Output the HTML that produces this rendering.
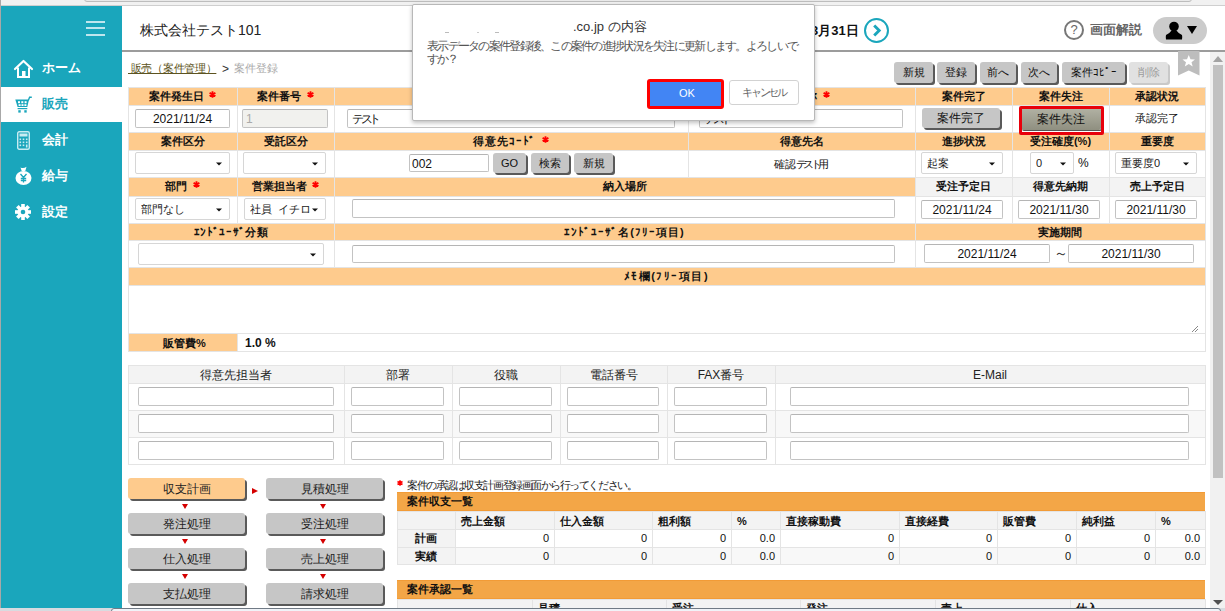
<!DOCTYPE html><html><head><meta charset="utf-8"><style>
html,body{margin:0;padding:0;}
body{width:1225px;height:611px;overflow:hidden;position:relative;background:#fff;font-family:"Liberation Sans",sans-serif;}
div{box-sizing:border-box;}
</style></head><body>
<div style="position:absolute;left:0px;top:0px;width:1225px;height:6px;background:#f1f1f1;border-bottom:1px solid #cfcfcf;"></div>
<div style="position:absolute;left:84px;top:-4px;width:1108px;height:6px;background:#e9e9e9;border:1px solid #bdbdbd;border-radius:3px;"></div>
<div style="position:absolute;left:0px;top:0px;width:1px;height:611px;background:#a8a8a8;"></div>
<div style="position:absolute;left:1px;top:6px;width:121px;height:602px;background:#1aa6bc;"></div>
<div style="position:absolute;left:86px;top:21px;width:19px;height:2px;background:#bfe6ee;"></div>
<div style="position:absolute;left:86px;top:27px;width:19px;height:2px;background:#bfe6ee;"></div>
<div style="position:absolute;left:86px;top:34px;width:19px;height:2px;background:#bfe6ee;"></div>
<div style="position:absolute;left:1px;top:87px;width:121px;height:35px;background:#fff;"></div>
<div style="position:absolute;left:42px;top:61px;font-size:13px;line-height:13px;color:#fff;font-weight:bold;white-space:nowrap;">ホーム</div>
<div style="position:absolute;left:42px;top:97px;font-size:13px;line-height:13px;color:#1aa6bc;font-weight:bold;white-space:nowrap;">販売</div>
<div style="position:absolute;left:42px;top:133px;font-size:13px;line-height:13px;color:#fff;font-weight:bold;white-space:nowrap;">会計</div>
<div style="position:absolute;left:42px;top:169px;font-size:13px;line-height:13px;color:#fff;font-weight:bold;white-space:nowrap;">給与</div>
<div style="position:absolute;left:42px;top:205px;font-size:13px;line-height:13px;color:#fff;font-weight:bold;white-space:nowrap;">設定</div>
<svg style="position:absolute;left:13px;top:59px" width="21" height="20" viewBox="0 0 21 20">
<path d="M2 10 L10.5 2 L19 10" fill="none" stroke="#fff" stroke-width="2.2" stroke-linecap="round" stroke-linejoin="round"/>
<path d="M5 8.5 V18 H16 V8.5" fill="none" stroke="#fff" stroke-width="2"/>
<rect x="9" y="12" width="3.5" height="6" fill="#fff"/>
</svg>
<svg style="position:absolute;left:15px;top:96px" width="17" height="17" viewBox="0 0 17 17">
<path d="M0.3 3.6 H14 L12.3 11 H2.6 Z" fill="#1aa6bc"/>
<g fill="#fff"><rect x="3" y="5.2" width="2" height="2"/><rect x="6.3" y="5.2" width="2" height="2"/><rect x="9.6" y="5.2" width="2" height="2"/>
<rect x="3.6" y="8.2" width="2" height="1.8"/><rect x="6.5" y="8.2" width="2" height="1.8"/><rect x="9.4" y="8.2" width="2" height="1.8"/></g>
<path d="M13.3 4.5 L14.6 1.2 H16.8" fill="none" stroke="#1aa6bc" stroke-width="1.4"/>
<path d="M2.6 12.6 H12.3" stroke="#1aa6bc" stroke-width="1.2"/>
<rect x="3.3" y="14.2" width="2.4" height="2.4" fill="#1aa6bc"/><rect x="9.3" y="14.2" width="2.4" height="2.4" fill="#1aa6bc"/>
</svg>
<svg style="position:absolute;left:17px;top:131px" width="13" height="19" viewBox="0 0 13 19">
<rect x="0.7" y="0.7" width="11.6" height="17.6" rx="1.5" fill="none" stroke="#c8ecf2" stroke-width="1.4"/>
<rect x="2.5" y="2.5" width="8" height="3" fill="#c8ecf2"/>
<g fill="#c8ecf2"><rect x="2.5" y="7.5" width="1.6" height="1.6"/><rect x="5.7" y="7.5" width="1.6" height="1.6"/><rect x="8.9" y="7.5" width="1.6" height="1.6"/>
<rect x="2.5" y="10.5" width="1.6" height="1.6"/><rect x="5.7" y="10.5" width="1.6" height="1.6"/><rect x="8.9" y="10.5" width="1.6" height="1.6"/>
<rect x="2.5" y="13.5" width="1.6" height="1.6"/><rect x="5.7" y="13.5" width="1.6" height="1.6"/><rect x="8.9" y="13.5" width="1.6" height="3"/></g>
</svg>
<svg style="position:absolute;left:15px;top:166px" width="17" height="19" viewBox="0 0 17 19">
<path d="M5.5 1.5 Q8.5 3 11.5 0.8 L10.3 5 H6.7 Z" fill="#fff"/>
<ellipse cx="8.5" cy="12" rx="8" ry="7" fill="#fff"/>
<path d="M5.5 8 L8.5 11.5 L11.5 8 M8.5 11.5 V16.5 M5.8 12.5 H11.2 M5.8 14.5 H11.2" fill="none" stroke="#1aa6bc" stroke-width="1.3"/>
</svg>
<svg style="position:absolute;left:15px;top:204px" width="16" height="16" viewBox="0 0 16 16">
<g fill="#fff" transform="translate(8 8)">
<rect x="-1.8" y="-8" width="3.6" height="16"/>
<rect x="-1.8" y="-8" width="3.6" height="16" transform="rotate(45)"/>
<rect x="-1.8" y="-8" width="3.6" height="16" transform="rotate(90)"/>
<rect x="-1.8" y="-8" width="3.6" height="16" transform="rotate(135)"/>
<circle r="5.5"/>
</g><circle cx="8" cy="8" r="2.3" fill="#1aa6bc"/>
</svg>
<div style="position:absolute;left:122px;top:6px;width:1103px;height:44px;background:#fff;"></div>
<div style="position:absolute;left:122px;top:50px;width:1103px;height:2px;background:#9c9c9c;"></div>
<div style="position:absolute;left:140px;top:23px;font-size:14px;line-height:14px;color:#222;font-weight:normal;white-space:nowrap;">株式会社テスト101</div>
<div style="position:absolute;left:811px;top:24px;font-size:13px;line-height:13px;color:#111;font-weight:bold;white-space:nowrap;">3月31日</div>
<div style="position:absolute;left:864px;top:18px;width:25px;height:25px;border:2.5px solid #1aa6bc;border-radius:50%;"></div>
<svg style="position:absolute;left:870px;top:24px" width="13" height="13" viewBox="0 0 13 13"><path d="M4.2 1.5 L9.2 6.5 L4.2 11.5" fill="none" stroke="#1aa6bc" stroke-width="2.9"/></svg>
<div style="position:absolute;left:1064px;top:20px;width:20px;height:20px;border:2px solid #777;border-radius:50%;color:#666;font-size:13px;line-height:16px;text-align:center;font-weight:normal;">?</div>
<div style="position:absolute;left:1090px;top:23px;font-size:13px;line-height:13px;color:#666;font-weight:bold;white-space:nowrap;">画面解説</div>
<div style="position:absolute;left:1153px;top:17px;width:54px;height:27px;background:#cbcbcb;border-radius:14px;"></div>
<svg style="position:absolute;left:1165px;top:21px" width="18" height="19" viewBox="0 0 18 19">
<circle cx="9" cy="5.5" r="4.8" fill="#000"/><path d="M6.5 9.5 Q5 12 1 14 Q0.5 16 1 18.5 H17 Q17.5 16 17 14 Q13 12 11.5 9.5 Z" fill="#000"/></svg>
<svg style="position:absolute;left:1187px;top:26px" width="10" height="8" viewBox="0 0 10 8"><path d="M0 0 H10 L5 8 Z" fill="#000"/></svg>
<div style="position:absolute;left:1210px;top:52px;width:15px;height:556px;background:#f1f1f1;"></div>
<svg style="position:absolute;left:1213px;top:56px" width="10" height="6" viewBox="0 0 10 6"><path d="M0 6 L5 0 L10 6 Z" fill="#a3a3a3"/></svg>
<div style="position:absolute;left:1213px;top:65px;width:10px;height:413px;background:#c1c1c1;"></div>
<svg style="position:absolute;left:1213px;top:600px" width="10" height="5" viewBox="0 0 10 5"><path d="M0 0 L5 5 L10 0 Z" fill="#505050"/></svg>
<div style="position:absolute;left:128px;top:63px;font-size:11px;line-height:11px;color:#5c5320;font-weight:normal;white-space:nowrap;text-decoration:underline;letter-spacing:-0.3px;">&nbsp;販売（案件管理）</div>
<div style="position:absolute;left:222px;top:63px;font-size:12px;line-height:12px;color:#333;font-weight:normal;white-space:nowrap;">&gt;</div>
<div style="position:absolute;left:234px;top:63px;font-size:11px;line-height:11px;color:#aaa;font-weight:normal;white-space:nowrap;">案件登録</div>
<svg style="position:absolute;left:1178px;top:51px" width="22" height="25" viewBox="0 0 22 25">
<path d="M0 0 H21.5 V24.5 L10.75 19.5 L0 24.5 Z" fill="#bdbdbd"/>
<path d="M10.75 4 L12.5 8.3 L17 8.5 L13.5 11.2 L14.7 15.5 L10.75 13 L6.8 15.5 L8 11.2 L4.5 8.5 L9 8.3 Z" fill="#fff"/></svg>
<div style="position:absolute;left:894px;top:62px;width:39px;height:21px;background:#c6c6c6;border-radius:3px;box-shadow:2px 2px 0 #5a5a5a;color:#111;font-size:11px;line-height:21px;text-align:center;white-space:nowrap;font-weight:normal">新規</div>
<div style="position:absolute;left:937px;top:62px;width:38px;height:21px;background:#c6c6c6;border-radius:3px;box-shadow:2px 2px 0 #5a5a5a;color:#111;font-size:11px;line-height:21px;text-align:center;white-space:nowrap;font-weight:normal">登録</div>
<div style="position:absolute;left:980px;top:62px;width:36px;height:21px;background:#c6c6c6;border-radius:3px;box-shadow:2px 2px 0 #5a5a5a;color:#111;font-size:11px;line-height:21px;text-align:center;white-space:nowrap;font-weight:normal">前へ</div>
<div style="position:absolute;left:1021px;top:62px;width:36px;height:21px;background:#c6c6c6;border-radius:3px;box-shadow:2px 2px 0 #5a5a5a;color:#111;font-size:11px;line-height:21px;text-align:center;white-space:nowrap;font-weight:normal">次へ</div>
<div style="position:absolute;left:1062px;top:62px;width:63px;height:21px;background:#c6c6c6;border-radius:3px;box-shadow:2px 2px 0 #5a5a5a;color:#111;font-size:11px;line-height:21px;text-align:center;white-space:nowrap;font-weight:normal">案件ｺﾋﾟｰ</div>
<div style="position:absolute;left:1129px;top:62px;width:39px;height:21px;background:#e1e1e1;border-radius:3px;box-shadow:2px 2px 0 #c9c9c9;color:#9a9a9a;font-size:11px;line-height:21px;text-align:center;white-space:nowrap;font-weight:normal">削除</div>
<div style="position:absolute;left:128px;top:87px;width:110px;height:19px;background:#fecb8d;border:1px solid #e4e4e4;"></div>
<div style="position:absolute;left:128px;top:105px;width:110px;height:28px;background:#fff;border:1px solid #e4e4e4;"></div>
<div style="position:absolute;left:237px;top:87px;width:98px;height:19px;background:#fecb8d;border:1px solid #e4e4e4;"></div>
<div style="position:absolute;left:237px;top:105px;width:98px;height:28px;background:#fff;border:1px solid #e4e4e4;"></div>
<div style="position:absolute;left:334px;top:87px;width:355px;height:19px;background:#fecb8d;border:1px solid #e4e4e4;"></div>
<div style="position:absolute;left:334px;top:105px;width:355px;height:28px;background:#fff;border:1px solid #e4e4e4;"></div>
<div style="position:absolute;left:688px;top:87px;width:228px;height:19px;background:#fecb8d;border:1px solid #e4e4e4;"></div>
<div style="position:absolute;left:688px;top:105px;width:228px;height:28px;background:#fff;border:1px solid #e4e4e4;"></div>
<div style="position:absolute;left:915px;top:87px;width:98px;height:19px;background:#fecb8d;border:1px solid #e4e4e4;"></div>
<div style="position:absolute;left:915px;top:105px;width:98px;height:28px;background:#fff;border:1px solid #e4e4e4;"></div>
<div style="position:absolute;left:1012px;top:87px;width:98px;height:19px;background:#fecb8d;border:1px solid #e4e4e4;"></div>
<div style="position:absolute;left:1012px;top:105px;width:98px;height:28px;background:#fff;border:1px solid #e4e4e4;"></div>
<div style="position:absolute;left:1109px;top:87px;width:97px;height:19px;background:#fecb8d;border:1px solid #e4e4e4;"></div>
<div style="position:absolute;left:1109px;top:105px;width:97px;height:28px;background:#fff;border:1px solid #e4e4e4;"></div>
<div style="position:absolute;left:128px;top:132px;width:110px;height:19px;background:#fecb8d;border:1px solid #e4e4e4;"></div>
<div style="position:absolute;left:128px;top:150px;width:110px;height:28px;background:#fff;border:1px solid #e4e4e4;"></div>
<div style="position:absolute;left:237px;top:132px;width:98px;height:19px;background:#fecb8d;border:1px solid #e4e4e4;"></div>
<div style="position:absolute;left:237px;top:150px;width:98px;height:28px;background:#fff;border:1px solid #e4e4e4;"></div>
<div style="position:absolute;left:334px;top:132px;width:355px;height:19px;background:#fecb8d;border:1px solid #e4e4e4;"></div>
<div style="position:absolute;left:334px;top:150px;width:355px;height:28px;background:#fff;border:1px solid #e4e4e4;"></div>
<div style="position:absolute;left:688px;top:132px;width:228px;height:19px;background:#fecb8d;border:1px solid #e4e4e4;"></div>
<div style="position:absolute;left:688px;top:150px;width:228px;height:28px;background:#fff;border:1px solid #e4e4e4;"></div>
<div style="position:absolute;left:915px;top:132px;width:98px;height:19px;background:#fecb8d;border:1px solid #e4e4e4;"></div>
<div style="position:absolute;left:915px;top:150px;width:98px;height:28px;background:#fff;border:1px solid #e4e4e4;"></div>
<div style="position:absolute;left:1012px;top:132px;width:98px;height:19px;background:#fecb8d;border:1px solid #e4e4e4;"></div>
<div style="position:absolute;left:1012px;top:150px;width:98px;height:28px;background:#fff;border:1px solid #e4e4e4;"></div>
<div style="position:absolute;left:1109px;top:132px;width:97px;height:19px;background:#fecb8d;border:1px solid #e4e4e4;"></div>
<div style="position:absolute;left:1109px;top:150px;width:97px;height:28px;background:#fff;border:1px solid #e4e4e4;"></div>
<div style="position:absolute;left:128px;top:177px;width:110px;height:20px;background:#fecb8d;border:1px solid #e4e4e4;"></div>
<div style="position:absolute;left:128px;top:196px;width:110px;height:28px;background:#fff;border:1px solid #e4e4e4;"></div>
<div style="position:absolute;left:237px;top:177px;width:98px;height:20px;background:#fecb8d;border:1px solid #e4e4e4;"></div>
<div style="position:absolute;left:237px;top:196px;width:98px;height:28px;background:#fff;border:1px solid #e4e4e4;"></div>
<div style="position:absolute;left:334px;top:177px;width:582px;height:20px;background:#fecb8d;border:1px solid #e4e4e4;"></div>
<div style="position:absolute;left:334px;top:196px;width:582px;height:28px;background:#fff;border:1px solid #e4e4e4;"></div>
<div style="position:absolute;left:915px;top:177px;width:98px;height:20px;background:#f3f3f3;border:1px solid #e4e4e4;"></div>
<div style="position:absolute;left:915px;top:196px;width:98px;height:28px;background:#fff;border:1px solid #e4e4e4;"></div>
<div style="position:absolute;left:1012px;top:177px;width:98px;height:20px;background:#f3f3f3;border:1px solid #e4e4e4;"></div>
<div style="position:absolute;left:1012px;top:196px;width:98px;height:28px;background:#fff;border:1px solid #e4e4e4;"></div>
<div style="position:absolute;left:1109px;top:177px;width:97px;height:20px;background:#f3f3f3;border:1px solid #e4e4e4;"></div>
<div style="position:absolute;left:1109px;top:196px;width:97px;height:28px;background:#fff;border:1px solid #e4e4e4;"></div>
<div style="position:absolute;left:128px;top:223px;width:207px;height:18px;background:#fecb8d;border:1px solid #e4e4e4;"></div>
<div style="position:absolute;left:128px;top:240px;width:207px;height:28px;background:#fff;border:1px solid #e4e4e4;"></div>
<div style="position:absolute;left:334px;top:223px;width:582px;height:18px;background:#fecb8d;border:1px solid #e4e4e4;"></div>
<div style="position:absolute;left:334px;top:240px;width:582px;height:28px;background:#fff;border:1px solid #e4e4e4;"></div>
<div style="position:absolute;left:915px;top:223px;width:291px;height:18px;background:#fecb8d;border:1px solid #e4e4e4;"></div>
<div style="position:absolute;left:915px;top:240px;width:291px;height:28px;background:#fff;border:1px solid #e4e4e4;"></div>
<div style="position:absolute;left:128px;top:267px;width:1078px;height:19px;background:#fecb8d;border:1px solid #e4e4e4;"></div>
<div style="position:absolute;left:128px;top:285px;width:1078px;height:49px;background:#fff;border:1px solid #e4e4e4;"></div>
<div style="position:absolute;left:128px;top:333px;width:110px;height:19px;background:#fecb8d;border:1px solid #e4e4e4;"></div>
<div style="position:absolute;left:237px;top:333px;width:969px;height:19px;background:#fff;border:1px solid #e4e4e4;"></div>
<div style="position:absolute;left:128px;top:91px;width:109px;text-align:center;font-size:11px;line-height:11px;color:#111;font-weight:bold;white-space:nowrap;">案件発生日 <svg style="display:inline-block;vertical-align:top;margin-top:0px;margin-left:2px" width="7" height="7" viewBox="0 0 7 7"><path d="M3.5 0.3 V6.7 M0.6 1.9 L6.4 5.1 M0.6 5.1 L6.4 1.9" stroke="#f00" stroke-width="1.8"/></svg></div>
<div style="position:absolute;left:237px;top:91px;width:97px;text-align:center;font-size:11px;line-height:11px;color:#111;font-weight:bold;white-space:nowrap;">案件番号 <svg style="display:inline-block;vertical-align:top;margin-top:0px;margin-left:2px" width="7" height="7" viewBox="0 0 7 7"><path d="M3.5 0.3 V6.7 M0.6 1.9 L6.4 5.1 M0.6 5.1 L6.4 1.9" stroke="#f00" stroke-width="1.8"/></svg></div>
<div style="position:absolute;left:688px;top:91px;width:227px;text-align:center;font-size:11px;line-height:11px;color:#111;font-weight:bold;white-space:nowrap;">案件名称 <svg style="display:inline-block;vertical-align:top;margin-top:0px;margin-left:2px" width="7" height="7" viewBox="0 0 7 7"><path d="M3.5 0.3 V6.7 M0.6 1.9 L6.4 5.1 M0.6 5.1 L6.4 1.9" stroke="#f00" stroke-width="1.8"/></svg></div>
<div style="position:absolute;left:915px;top:91px;width:97px;text-align:center;font-size:11px;line-height:11px;color:#111;font-weight:bold;white-space:nowrap;">案件完了</div>
<div style="position:absolute;left:1012px;top:91px;width:97px;text-align:center;font-size:11px;line-height:11px;color:#111;font-weight:bold;white-space:nowrap;">案件失注</div>
<div style="position:absolute;left:1109px;top:91px;width:96px;text-align:center;font-size:11px;line-height:11px;color:#111;font-weight:bold;white-space:nowrap;">承認状況</div>
<div style="position:absolute;left:128px;top:136px;width:109px;text-align:center;font-size:11px;line-height:11px;color:#111;font-weight:bold;white-space:nowrap;">案件区分</div>
<div style="position:absolute;left:237px;top:136px;width:97px;text-align:center;font-size:11px;line-height:11px;color:#111;font-weight:bold;white-space:nowrap;">受託区分</div>
<div style="position:absolute;left:334px;top:136px;width:354px;text-align:center;font-size:11px;line-height:11px;color:#111;font-weight:bold;white-space:nowrap;letter-spacing:0.85px;">得意先ｺｰﾄﾞ <svg style="display:inline-block;vertical-align:top;margin-top:0px;margin-left:2px" width="7" height="7" viewBox="0 0 7 7"><path d="M3.5 0.3 V6.7 M0.6 1.9 L6.4 5.1 M0.6 5.1 L6.4 1.9" stroke="#f00" stroke-width="1.8"/></svg></div>
<div style="position:absolute;left:688px;top:136px;width:227px;text-align:center;font-size:11px;line-height:11px;color:#111;font-weight:bold;white-space:nowrap;">得意先名</div>
<div style="position:absolute;left:915px;top:136px;width:97px;text-align:center;font-size:11px;line-height:11px;color:#111;font-weight:bold;white-space:nowrap;">進捗状況</div>
<div style="position:absolute;left:1012px;top:136px;width:97px;text-align:center;font-size:11px;line-height:11px;color:#111;font-weight:bold;white-space:nowrap;">受注確度(%)</div>
<div style="position:absolute;left:1109px;top:136px;width:96px;text-align:center;font-size:11px;line-height:11px;color:#111;font-weight:bold;white-space:nowrap;">重要度</div>
<div style="position:absolute;left:128px;top:181px;width:109px;text-align:center;font-size:11px;line-height:11px;color:#111;font-weight:bold;white-space:nowrap;">部門 <svg style="display:inline-block;vertical-align:top;margin-top:0px;margin-left:2px" width="7" height="7" viewBox="0 0 7 7"><path d="M3.5 0.3 V6.7 M0.6 1.9 L6.4 5.1 M0.6 5.1 L6.4 1.9" stroke="#f00" stroke-width="1.8"/></svg></div>
<div style="position:absolute;left:237px;top:181px;width:97px;text-align:center;font-size:11px;line-height:11px;color:#111;font-weight:bold;white-space:nowrap;">営業担当者 <svg style="display:inline-block;vertical-align:top;margin-top:0px;margin-left:2px" width="7" height="7" viewBox="0 0 7 7"><path d="M3.5 0.3 V6.7 M0.6 1.9 L6.4 5.1 M0.6 5.1 L6.4 1.9" stroke="#f00" stroke-width="1.8"/></svg></div>
<div style="position:absolute;left:334px;top:181px;width:581px;text-align:center;font-size:11px;line-height:11px;color:#111;font-weight:bold;white-space:nowrap;">納入場所</div>
<div style="position:absolute;left:915px;top:181px;width:97px;text-align:center;font-size:11px;line-height:11px;color:#111;font-weight:bold;white-space:nowrap;">受注予定日</div>
<div style="position:absolute;left:1012px;top:181px;width:97px;text-align:center;font-size:11px;line-height:11px;color:#111;font-weight:bold;white-space:nowrap;">得意先納期</div>
<div style="position:absolute;left:1109px;top:181px;width:96px;text-align:center;font-size:11px;line-height:11px;color:#111;font-weight:bold;white-space:nowrap;">売上予定日</div>
<div style="position:absolute;left:128px;top:227px;width:206px;text-align:center;font-size:11px;line-height:11px;color:#111;font-weight:bold;white-space:nowrap;letter-spacing:0.6px;">ｴﾝﾄﾞﾕｰｻﾞ分類</div>
<div style="position:absolute;left:334px;top:227px;width:581px;text-align:center;font-size:11px;line-height:11px;color:#111;font-weight:bold;white-space:nowrap;letter-spacing:1px;">ｴﾝﾄﾞﾕｰｻﾞ名(ﾌﾘｰ項目)</div>
<div style="position:absolute;left:915px;top:227px;width:290px;text-align:center;font-size:11px;line-height:11px;color:#111;font-weight:bold;white-space:nowrap;">実施期間</div>
<div style="position:absolute;left:128px;top:271px;width:1077px;text-align:center;font-size:11px;line-height:11px;color:#111;font-weight:bold;white-space:nowrap;letter-spacing:1.5px;">ﾒﾓ欄(ﾌﾘｰ項目)</div>
<div style="position:absolute;left:130px;top:338px;width:109px;text-align:center;font-size:11px;line-height:11px;color:#111;font-weight:bold;white-space:nowrap;">販管費%</div>
<div style="position:absolute;left:245px;top:337px;font-size:12px;line-height:12px;color:#111;font-weight:bold;white-space:nowrap;">1.0 %</div>
<div style="position:absolute;left:135px;top:109px;width:95px;height:19px;background:#fff;border:1px solid #c3c3c3;border-top-color:#b5b5b5;border-radius:2px;font-size:12px;line-height:17px;color:#111;text-align:center;padding:1px 4px 0 4px;white-space:nowrap;overflow:hidden;">2021/11/24</div>
<div style="position:absolute;left:242px;top:109px;width:86px;height:19px;background:#f1f1ee;border:1px solid #c3c3c3;border-top-color:#b5b5b5;border-radius:2px;font-size:12px;line-height:17px;color:#aaa;text-align:left;padding:1px 3px 0 3px;white-space:nowrap;overflow:hidden;">1</div>
<div style="position:absolute;left:347px;top:109px;width:328px;height:19px;background:#fff;border:1px solid #c3c3c3;border-top-color:#b5b5b5;border-radius:2px;font-size:12px;line-height:17px;color:#111;text-align:left;padding:1px 4px 0 4px;white-space:nowrap;overflow:hidden;"><span style="letter-spacing:-3.5px">テスト</span></div>
<div style="position:absolute;left:699px;top:109px;width:204px;height:19px;background:#fff;border:1px solid #c3c3c3;border-top-color:#b5b5b5;border-radius:2px;font-size:12px;line-height:17px;color:#111;text-align:left;padding:1px 4px 0 4px;white-space:nowrap;overflow:hidden;"><span style="letter-spacing:-3.5px">テスト</span></div>
<div style="position:absolute;left:922px;top:108px;width:78px;height:20px;background:#c6c6c6;border-radius:3px;box-shadow:2px 2px 0 #5a5a5a;color:#111;font-size:12px;line-height:20px;text-align:center;white-space:nowrap;font-weight:normal">案件完了</div>
<div style="position:absolute;left:1021px;top:108px;width:80px;height:22px;background:linear-gradient(#b2b2a4,#8f8f80);border-radius:2px;box-shadow:1px 1px 0 #555;font-size:12px;line-height:22px;text-align:center;color:#111;">案件失注</div>
<div style="position:absolute;left:1019px;top:106px;width:85px;height:29px;border:3px solid #e8000b;border-radius:2px;"></div>
<div style="position:absolute;left:1109px;top:113px;width:96px;text-align:center;font-size:11px;line-height:11px;color:#111;font-weight:normal;white-space:nowrap;">承認完了</div>
<div style="position:absolute;left:135px;top:152px;width:95px;height:22px;background:#fff;border:1px solid #d6d6d6;border-radius:2px;font-size:11px;line-height:20px;color:#222;padding:0 0 0 5px;white-space:nowrap;overflow:hidden;"><div style="width:73px;overflow:hidden;"></div></div>
<svg style="position:absolute;left:216px;top:162px" width="6" height="4" viewBox="0 0 6 4"><path d="M0 0.5 H6 L3 3.5 Z" fill="#111"/></svg>
<div style="position:absolute;left:243px;top:152px;width:83px;height:22px;background:#fff;border:1px solid #d6d6d6;border-radius:2px;font-size:11px;line-height:20px;color:#222;padding:0 0 0 5px;white-space:nowrap;overflow:hidden;"><div style="width:61px;overflow:hidden;"></div></div>
<svg style="position:absolute;left:312px;top:162px" width="6" height="4" viewBox="0 0 6 4"><path d="M0 0.5 H6 L3 3.5 Z" fill="#111"/></svg>
<div style="position:absolute;left:409px;top:154px;width:80px;height:18px;background:#fff;border:1px solid #c3c3c3;border-top-color:#b5b5b5;border-radius:2px;font-size:12px;line-height:16px;color:#111;text-align:left;padding:1px 2px 0 2px;white-space:nowrap;overflow:hidden;">002</div>
<div style="position:absolute;left:493px;top:153px;width:33px;height:20px;background:#c6c6c6;border-radius:3px;box-shadow:2px 2px 0 #5a5a5a;color:#111;font-size:11px;line-height:20px;text-align:center;white-space:nowrap;font-weight:normal">GO</div>
<div style="position:absolute;left:531px;top:153px;width:38px;height:20px;background:#c6c6c6;border-radius:3px;box-shadow:2px 2px 0 #5a5a5a;color:#111;font-size:11px;line-height:20px;text-align:center;white-space:nowrap;font-weight:normal">検索</div>
<div style="position:absolute;left:574px;top:153px;width:39px;height:20px;background:#c6c6c6;border-radius:3px;box-shadow:2px 2px 0 #5a5a5a;color:#111;font-size:11px;line-height:20px;text-align:center;white-space:nowrap;font-weight:normal">新規</div>
<div style="position:absolute;left:688px;top:159px;width:227px;text-align:center;font-size:11px;line-height:11px;color:#111;font-weight:normal;white-space:nowrap;">確認<span style="letter-spacing:-3.5px">テスト</span>用</div>
<div style="position:absolute;left:921px;top:152px;width:82px;height:22px;background:#fff;border:1px solid #d6d6d6;border-radius:2px;font-size:11px;line-height:20px;color:#222;padding:0 0 0 5px;white-space:nowrap;overflow:hidden;"><div style="width:60px;overflow:hidden;">起案</div></div>
<svg style="position:absolute;left:989px;top:162px" width="6" height="4" viewBox="0 0 6 4"><path d="M0 0.5 H6 L3 3.5 Z" fill="#111"/></svg>
<div style="position:absolute;left:1030px;top:152px;width:44px;height:22px;background:#fff;border:1px solid #d6d6d6;border-radius:2px;font-size:11px;line-height:20px;color:#222;padding:0 0 0 5px;white-space:nowrap;overflow:hidden;"><div style="width:22px;overflow:hidden;">0</div></div>
<svg style="position:absolute;left:1060px;top:162px" width="6" height="4" viewBox="0 0 6 4"><path d="M0 0.5 H6 L3 3.5 Z" fill="#111"/></svg>
<div style="position:absolute;left:1078px;top:157px;font-size:12px;line-height:12px;color:#111;font-weight:normal;white-space:nowrap;">%</div>
<div style="position:absolute;left:1115px;top:152px;width:82px;height:22px;background:#fff;border:1px solid #d6d6d6;border-radius:2px;font-size:11px;line-height:20px;color:#222;padding:0 0 0 5px;white-space:nowrap;overflow:hidden;"><div style="width:60px;overflow:hidden;">重要度0</div></div>
<svg style="position:absolute;left:1183px;top:162px" width="6" height="4" viewBox="0 0 6 4"><path d="M0 0.5 H6 L3 3.5 Z" fill="#111"/></svg>
<div style="position:absolute;left:135px;top:198px;width:95px;height:22px;background:#fff;border:1px solid #d6d6d6;border-radius:2px;font-size:11px;line-height:20px;color:#222;padding:0 0 0 5px;white-space:nowrap;overflow:hidden;"><div style="width:73px;overflow:hidden;">部門なし</div></div>
<svg style="position:absolute;left:216px;top:208px" width="6" height="4" viewBox="0 0 6 4"><path d="M0 0.5 H6 L3 3.5 Z" fill="#111"/></svg>
<div style="position:absolute;left:244px;top:198px;width:82px;height:22px;background:#fff;border:1px solid #d6d6d6;border-radius:2px;font-size:11px;line-height:20px;color:#222;padding:0 0 0 5px;white-space:nowrap;overflow:hidden;"><div style="width:60px;overflow:hidden;">社員&nbsp;&nbsp;イチロウ</div></div>
<svg style="position:absolute;left:312px;top:208px" width="6" height="4" viewBox="0 0 6 4"><path d="M0 0.5 H6 L3 3.5 Z" fill="#111"/></svg>
<div style="position:absolute;left:352px;top:199px;width:543px;height:19px;background:#fff;border:1px solid #c3c3c3;border-top-color:#b5b5b5;border-radius:2px;font-size:12px;line-height:17px;color:#111;text-align:left;padding:1px 4px 0 4px;white-space:nowrap;overflow:hidden;"></div>
<div style="position:absolute;left:921px;top:200px;width:82px;height:19px;background:#fff;border:1px solid #c3c3c3;border-top-color:#b5b5b5;border-radius:2px;font-size:12px;line-height:17px;color:#111;text-align:center;padding:1px 4px 0 4px;white-space:nowrap;overflow:hidden;">2021/11/24</div>
<div style="position:absolute;left:1018px;top:200px;width:82px;height:19px;background:#fff;border:1px solid #c3c3c3;border-top-color:#b5b5b5;border-radius:2px;font-size:12px;line-height:17px;color:#111;text-align:center;padding:1px 4px 0 4px;white-space:nowrap;overflow:hidden;">2021/11/30</div>
<div style="position:absolute;left:1115px;top:200px;width:82px;height:19px;background:#fff;border:1px solid #c3c3c3;border-top-color:#b5b5b5;border-radius:2px;font-size:12px;line-height:17px;color:#111;text-align:center;padding:1px 4px 0 4px;white-space:nowrap;overflow:hidden;">2021/11/30</div>
<div style="position:absolute;left:138px;top:243px;width:186px;height:22px;background:#fff;border:1px solid #d6d6d6;border-radius:2px;font-size:11px;line-height:20px;color:#222;padding:0 0 0 5px;white-space:nowrap;overflow:hidden;"><div style="width:164px;overflow:hidden;"></div></div>
<svg style="position:absolute;left:310px;top:253px" width="6" height="4" viewBox="0 0 6 4"><path d="M0 0.5 H6 L3 3.5 Z" fill="#111"/></svg>
<div style="position:absolute;left:352px;top:245px;width:543px;height:18px;background:#fff;border:1px solid #c3c3c3;border-top-color:#b5b5b5;border-radius:2px;font-size:12px;line-height:16px;color:#111;text-align:left;padding:1px 4px 0 4px;white-space:nowrap;overflow:hidden;"></div>
<div style="position:absolute;left:924px;top:244px;width:126px;height:19px;background:#fff;border:1px solid #c3c3c3;border-top-color:#b5b5b5;border-radius:2px;font-size:12px;line-height:17px;color:#111;text-align:center;padding:1px 4px 0 4px;white-space:nowrap;overflow:hidden;">2021/11/24</div>
<div style="position:absolute;left:1054px;top:246px;font-size:14px;line-height:14px;color:#333;font-weight:normal;white-space:nowrap;">～</div>
<div style="position:absolute;left:1068px;top:244px;width:126px;height:19px;background:#fff;border:1px solid #c3c3c3;border-top-color:#b5b5b5;border-radius:2px;font-size:12px;line-height:17px;color:#111;text-align:center;padding:1px 4px 0 4px;white-space:nowrap;overflow:hidden;">2021/11/30</div>
<svg style="position:absolute;left:1191px;top:325px" width="8" height="8" viewBox="0 0 8 8"><path d="M1 7 L7 1 M4 7 L7 4" stroke="#888" stroke-width="1"/></svg>
<div style="position:absolute;left:128px;top:365px;width:217px;height:19px;background:#f3f3f3;border:1px solid #e4e4e4;"></div>
<div style="position:absolute;left:128px;top:383px;width:217px;height:28px;background:#fff;border:1px solid #e4e4e4;"></div>
<div style="position:absolute;left:128px;top:410px;width:217px;height:28px;background:#f8f8f8;border:1px solid #e4e4e4;"></div>
<div style="position:absolute;left:128px;top:437px;width:217px;height:28px;background:#fff;border:1px solid #e4e4e4;"></div>
<div style="position:absolute;left:344px;top:365px;width:109px;height:19px;background:#f3f3f3;border:1px solid #e4e4e4;"></div>
<div style="position:absolute;left:344px;top:383px;width:109px;height:28px;background:#fff;border:1px solid #e4e4e4;"></div>
<div style="position:absolute;left:344px;top:410px;width:109px;height:28px;background:#f8f8f8;border:1px solid #e4e4e4;"></div>
<div style="position:absolute;left:344px;top:437px;width:109px;height:28px;background:#fff;border:1px solid #e4e4e4;"></div>
<div style="position:absolute;left:452px;top:365px;width:109px;height:19px;background:#f3f3f3;border:1px solid #e4e4e4;"></div>
<div style="position:absolute;left:452px;top:383px;width:109px;height:28px;background:#fff;border:1px solid #e4e4e4;"></div>
<div style="position:absolute;left:452px;top:410px;width:109px;height:28px;background:#f8f8f8;border:1px solid #e4e4e4;"></div>
<div style="position:absolute;left:452px;top:437px;width:109px;height:28px;background:#fff;border:1px solid #e4e4e4;"></div>
<div style="position:absolute;left:560px;top:365px;width:108px;height:19px;background:#f3f3f3;border:1px solid #e4e4e4;"></div>
<div style="position:absolute;left:560px;top:383px;width:108px;height:28px;background:#fff;border:1px solid #e4e4e4;"></div>
<div style="position:absolute;left:560px;top:410px;width:108px;height:28px;background:#f8f8f8;border:1px solid #e4e4e4;"></div>
<div style="position:absolute;left:560px;top:437px;width:108px;height:28px;background:#fff;border:1px solid #e4e4e4;"></div>
<div style="position:absolute;left:667px;top:365px;width:109px;height:19px;background:#f3f3f3;border:1px solid #e4e4e4;"></div>
<div style="position:absolute;left:667px;top:383px;width:109px;height:28px;background:#fff;border:1px solid #e4e4e4;"></div>
<div style="position:absolute;left:667px;top:410px;width:109px;height:28px;background:#f8f8f8;border:1px solid #e4e4e4;"></div>
<div style="position:absolute;left:667px;top:437px;width:109px;height:28px;background:#fff;border:1px solid #e4e4e4;"></div>
<div style="position:absolute;left:775px;top:365px;width:431px;height:19px;background:#f3f3f3;border:1px solid #e4e4e4;"></div>
<div style="position:absolute;left:775px;top:383px;width:431px;height:28px;background:#fff;border:1px solid #e4e4e4;"></div>
<div style="position:absolute;left:775px;top:410px;width:431px;height:28px;background:#f8f8f8;border:1px solid #e4e4e4;"></div>
<div style="position:absolute;left:775px;top:437px;width:431px;height:28px;background:#fff;border:1px solid #e4e4e4;"></div>
<div style="position:absolute;left:128px;top:369px;width:216px;text-align:center;font-size:12px;line-height:12px;color:#222;font-weight:normal;white-space:nowrap;">得意先担当者</div>
<div style="position:absolute;left:344px;top:369px;width:108px;text-align:center;font-size:12px;line-height:12px;color:#222;font-weight:normal;white-space:nowrap;">部署</div>
<div style="position:absolute;left:452px;top:369px;width:108px;text-align:center;font-size:12px;line-height:12px;color:#222;font-weight:normal;white-space:nowrap;">役職</div>
<div style="position:absolute;left:560px;top:369px;width:107px;text-align:center;font-size:12px;line-height:12px;color:#222;font-weight:normal;white-space:nowrap;">電話番号</div>
<div style="position:absolute;left:667px;top:369px;width:108px;text-align:center;font-size:12px;line-height:12px;color:#222;font-weight:normal;white-space:nowrap;">FAX番号</div>
<div style="position:absolute;left:775px;top:369px;width:430px;text-align:center;font-size:12px;line-height:12px;color:#222;font-weight:normal;white-space:nowrap;">E-Mail</div>
<div style="position:absolute;left:138px;top:387px;width:196px;height:19px;background:#fff;border:1px solid #c3c3c3;border-top-color:#b5b5b5;border-radius:2px;font-size:12px;line-height:17px;color:#111;text-align:left;padding:1px 4px 0 4px;white-space:nowrap;overflow:hidden;"></div>
<div style="position:absolute;left:351px;top:387px;width:93px;height:19px;background:#fff;border:1px solid #c3c3c3;border-top-color:#b5b5b5;border-radius:2px;font-size:12px;line-height:17px;color:#111;text-align:left;padding:1px 4px 0 4px;white-space:nowrap;overflow:hidden;"></div>
<div style="position:absolute;left:459px;top:387px;width:93px;height:19px;background:#fff;border:1px solid #c3c3c3;border-top-color:#b5b5b5;border-radius:2px;font-size:12px;line-height:17px;color:#111;text-align:left;padding:1px 4px 0 4px;white-space:nowrap;overflow:hidden;"></div>
<div style="position:absolute;left:567px;top:387px;width:92px;height:19px;background:#fff;border:1px solid #c3c3c3;border-top-color:#b5b5b5;border-radius:2px;font-size:12px;line-height:17px;color:#111;text-align:left;padding:1px 4px 0 4px;white-space:nowrap;overflow:hidden;"></div>
<div style="position:absolute;left:674px;top:387px;width:93px;height:19px;background:#fff;border:1px solid #c3c3c3;border-top-color:#b5b5b5;border-radius:2px;font-size:12px;line-height:17px;color:#111;text-align:left;padding:1px 4px 0 4px;white-space:nowrap;overflow:hidden;"></div>
<div style="position:absolute;left:790px;top:387px;width:399px;height:19px;background:#fff;border:1px solid #c3c3c3;border-top-color:#b5b5b5;border-radius:2px;font-size:12px;line-height:17px;color:#111;text-align:left;padding:1px 4px 0 4px;white-space:nowrap;overflow:hidden;"></div>
<div style="position:absolute;left:138px;top:414px;width:196px;height:19px;background:#fff;border:1px solid #c3c3c3;border-top-color:#b5b5b5;border-radius:2px;font-size:12px;line-height:17px;color:#111;text-align:left;padding:1px 4px 0 4px;white-space:nowrap;overflow:hidden;"></div>
<div style="position:absolute;left:351px;top:414px;width:93px;height:19px;background:#fff;border:1px solid #c3c3c3;border-top-color:#b5b5b5;border-radius:2px;font-size:12px;line-height:17px;color:#111;text-align:left;padding:1px 4px 0 4px;white-space:nowrap;overflow:hidden;"></div>
<div style="position:absolute;left:459px;top:414px;width:93px;height:19px;background:#fff;border:1px solid #c3c3c3;border-top-color:#b5b5b5;border-radius:2px;font-size:12px;line-height:17px;color:#111;text-align:left;padding:1px 4px 0 4px;white-space:nowrap;overflow:hidden;"></div>
<div style="position:absolute;left:567px;top:414px;width:92px;height:19px;background:#fff;border:1px solid #c3c3c3;border-top-color:#b5b5b5;border-radius:2px;font-size:12px;line-height:17px;color:#111;text-align:left;padding:1px 4px 0 4px;white-space:nowrap;overflow:hidden;"></div>
<div style="position:absolute;left:674px;top:414px;width:93px;height:19px;background:#fff;border:1px solid #c3c3c3;border-top-color:#b5b5b5;border-radius:2px;font-size:12px;line-height:17px;color:#111;text-align:left;padding:1px 4px 0 4px;white-space:nowrap;overflow:hidden;"></div>
<div style="position:absolute;left:790px;top:414px;width:399px;height:19px;background:#fff;border:1px solid #c3c3c3;border-top-color:#b5b5b5;border-radius:2px;font-size:12px;line-height:17px;color:#111;text-align:left;padding:1px 4px 0 4px;white-space:nowrap;overflow:hidden;"></div>
<div style="position:absolute;left:138px;top:441px;width:196px;height:19px;background:#fff;border:1px solid #c3c3c3;border-top-color:#b5b5b5;border-radius:2px;font-size:12px;line-height:17px;color:#111;text-align:left;padding:1px 4px 0 4px;white-space:nowrap;overflow:hidden;"></div>
<div style="position:absolute;left:351px;top:441px;width:93px;height:19px;background:#fff;border:1px solid #c3c3c3;border-top-color:#b5b5b5;border-radius:2px;font-size:12px;line-height:17px;color:#111;text-align:left;padding:1px 4px 0 4px;white-space:nowrap;overflow:hidden;"></div>
<div style="position:absolute;left:459px;top:441px;width:93px;height:19px;background:#fff;border:1px solid #c3c3c3;border-top-color:#b5b5b5;border-radius:2px;font-size:12px;line-height:17px;color:#111;text-align:left;padding:1px 4px 0 4px;white-space:nowrap;overflow:hidden;"></div>
<div style="position:absolute;left:567px;top:441px;width:92px;height:19px;background:#fff;border:1px solid #c3c3c3;border-top-color:#b5b5b5;border-radius:2px;font-size:12px;line-height:17px;color:#111;text-align:left;padding:1px 4px 0 4px;white-space:nowrap;overflow:hidden;"></div>
<div style="position:absolute;left:674px;top:441px;width:93px;height:19px;background:#fff;border:1px solid #c3c3c3;border-top-color:#b5b5b5;border-radius:2px;font-size:12px;line-height:17px;color:#111;text-align:left;padding:1px 4px 0 4px;white-space:nowrap;overflow:hidden;"></div>
<div style="position:absolute;left:790px;top:441px;width:399px;height:19px;background:#fff;border:1px solid #c3c3c3;border-top-color:#b5b5b5;border-radius:2px;font-size:12px;line-height:17px;color:#111;text-align:left;padding:1px 4px 0 4px;white-space:nowrap;overflow:hidden;"></div>
<div style="position:absolute;left:128px;top:478px;width:117px;height:21px;background:#fecb8d;border-radius:3px;box-shadow:2px 2px 0 #5a5a5a;font-size:12px;line-height:22px;text-align:center;color:#222;white-space:nowrap;">収支計画</div>
<div style="position:absolute;left:266px;top:478px;width:117px;height:21px;background:#c6c6c6;border-radius:3px;box-shadow:2px 2px 0 #5a5a5a;font-size:12px;line-height:22px;text-align:center;color:#222;white-space:nowrap;">見積処理</div>
<div style="position:absolute;left:128px;top:513px;width:117px;height:21px;background:#c6c6c6;border-radius:3px;box-shadow:2px 2px 0 #5a5a5a;font-size:12px;line-height:22px;text-align:center;color:#222;white-space:nowrap;">発注処理</div>
<div style="position:absolute;left:266px;top:513px;width:117px;height:21px;background:#c6c6c6;border-radius:3px;box-shadow:2px 2px 0 #5a5a5a;font-size:12px;line-height:22px;text-align:center;color:#222;white-space:nowrap;">受注処理</div>
<div style="position:absolute;left:128px;top:548px;width:117px;height:21px;background:#c6c6c6;border-radius:3px;box-shadow:2px 2px 0 #5a5a5a;font-size:12px;line-height:22px;text-align:center;color:#222;white-space:nowrap;">仕入処理</div>
<div style="position:absolute;left:266px;top:548px;width:117px;height:21px;background:#c6c6c6;border-radius:3px;box-shadow:2px 2px 0 #5a5a5a;font-size:12px;line-height:22px;text-align:center;color:#222;white-space:nowrap;">売上処理</div>
<div style="position:absolute;left:128px;top:583px;width:117px;height:21px;background:#c6c6c6;border-radius:3px;box-shadow:2px 2px 0 #5a5a5a;font-size:12px;line-height:22px;text-align:center;color:#222;white-space:nowrap;">支払処理</div>
<div style="position:absolute;left:266px;top:583px;width:117px;height:21px;background:#c6c6c6;border-radius:3px;box-shadow:2px 2px 0 #5a5a5a;font-size:12px;line-height:22px;text-align:center;color:#222;white-space:nowrap;">請求処理</div>
<svg style="position:absolute;left:182px;top:504px" width="6" height="5" viewBox="0 0 6 5"><path d="M0 0 H6 L3 5 Z" fill="#d40000"/></svg>
<svg style="position:absolute;left:320px;top:504px" width="6" height="5" viewBox="0 0 6 5"><path d="M0 0 H6 L3 5 Z" fill="#d40000"/></svg>
<svg style="position:absolute;left:182px;top:539px" width="6" height="5" viewBox="0 0 6 5"><path d="M0 0 H6 L3 5 Z" fill="#d40000"/></svg>
<svg style="position:absolute;left:320px;top:539px" width="6" height="5" viewBox="0 0 6 5"><path d="M0 0 H6 L3 5 Z" fill="#d40000"/></svg>
<svg style="position:absolute;left:182px;top:574px" width="6" height="5" viewBox="0 0 6 5"><path d="M0 0 H6 L3 5 Z" fill="#d40000"/></svg>
<svg style="position:absolute;left:320px;top:574px" width="6" height="5" viewBox="0 0 6 5"><path d="M0 0 H6 L3 5 Z" fill="#d40000"/></svg>
<svg style="position:absolute;left:252px;top:488px" width="6" height="6" viewBox="0 0 6 6"><path d="M0 0 V6 L6 3 Z" fill="#d40000"/></svg>
<svg style="position:absolute;left:397px;top:480px" width="6" height="6" viewBox="0 0 6 6"><path d="M3 0.2 V5.8 M0.5 1.5 L5.5 4.5 M0.5 4.5 L5.5 1.5" stroke="#f00" stroke-width="1.5"/></svg>
<div style="position:absolute;left:407px;top:480px;font-size:11px;line-height:11px;color:#222;font-weight:normal;white-space:nowrap;letter-spacing:-1.45px;">案件の承認は収支計画登録画面から行ってください。</div>
<div style="position:absolute;left:397px;top:492px;width:808px;height:19px;background:#f3a647;border-top:1px solid #f29b36;border-bottom:1px solid #f29b36;"></div>
<div style="position:absolute;left:407px;top:496px;font-size:11px;line-height:11px;color:#111;font-weight:bold;white-space:nowrap;">案件収支一覧</div>
<div style="position:absolute;left:397px;top:511px;width:59px;height:19px;background:#f3f3f3;border:1px solid #e4e4e4;"></div>
<div style="position:absolute;left:397px;top:529px;width:59px;height:19px;background:#f3f3f3;border:1px solid #e4e4e4;"></div>
<div style="position:absolute;left:397px;top:547px;width:59px;height:18px;background:#f3f3f3;border:1px solid #e4e4e4;"></div>
<div style="position:absolute;left:455px;top:511px;width:100px;height:19px;background:#f3f3f3;border:1px solid #e4e4e4;"></div>
<div style="position:absolute;left:455px;top:529px;width:100px;height:19px;background:#fff;border:1px solid #e4e4e4;"></div>
<div style="position:absolute;left:455px;top:547px;width:100px;height:18px;background:#f8f8f8;border:1px solid #e4e4e4;"></div>
<div style="position:absolute;left:461px;top:516px;font-size:11px;line-height:11px;color:#111;font-weight:bold;white-space:nowrap;">売上金額</div>
<div style="position:absolute;left:554px;top:511px;width:99px;height:19px;background:#f3f3f3;border:1px solid #e4e4e4;"></div>
<div style="position:absolute;left:554px;top:529px;width:99px;height:19px;background:#fff;border:1px solid #e4e4e4;"></div>
<div style="position:absolute;left:554px;top:547px;width:99px;height:18px;background:#f8f8f8;border:1px solid #e4e4e4;"></div>
<div style="position:absolute;left:560px;top:516px;font-size:11px;line-height:11px;color:#111;font-weight:bold;white-space:nowrap;">仕入金額</div>
<div style="position:absolute;left:652px;top:511px;width:80px;height:19px;background:#f3f3f3;border:1px solid #e4e4e4;"></div>
<div style="position:absolute;left:652px;top:529px;width:80px;height:19px;background:#fff;border:1px solid #e4e4e4;"></div>
<div style="position:absolute;left:652px;top:547px;width:80px;height:18px;background:#f8f8f8;border:1px solid #e4e4e4;"></div>
<div style="position:absolute;left:658px;top:516px;font-size:11px;line-height:11px;color:#111;font-weight:bold;white-space:nowrap;">粗利額</div>
<div style="position:absolute;left:731px;top:511px;width:50px;height:19px;background:#f3f3f3;border:1px solid #e4e4e4;"></div>
<div style="position:absolute;left:731px;top:529px;width:50px;height:19px;background:#fff;border:1px solid #e4e4e4;"></div>
<div style="position:absolute;left:731px;top:547px;width:50px;height:18px;background:#f8f8f8;border:1px solid #e4e4e4;"></div>
<div style="position:absolute;left:737px;top:516px;font-size:11px;line-height:11px;color:#111;font-weight:bold;white-space:nowrap;">%</div>
<div style="position:absolute;left:780px;top:511px;width:120px;height:19px;background:#f3f3f3;border:1px solid #e4e4e4;"></div>
<div style="position:absolute;left:780px;top:529px;width:120px;height:19px;background:#fff;border:1px solid #e4e4e4;"></div>
<div style="position:absolute;left:780px;top:547px;width:120px;height:18px;background:#f8f8f8;border:1px solid #e4e4e4;"></div>
<div style="position:absolute;left:786px;top:516px;font-size:11px;line-height:11px;color:#111;font-weight:bold;white-space:nowrap;">直接稼動費</div>
<div style="position:absolute;left:899px;top:511px;width:99px;height:19px;background:#f3f3f3;border:1px solid #e4e4e4;"></div>
<div style="position:absolute;left:899px;top:529px;width:99px;height:19px;background:#fff;border:1px solid #e4e4e4;"></div>
<div style="position:absolute;left:899px;top:547px;width:99px;height:18px;background:#f8f8f8;border:1px solid #e4e4e4;"></div>
<div style="position:absolute;left:905px;top:516px;font-size:11px;line-height:11px;color:#111;font-weight:bold;white-space:nowrap;">直接経費</div>
<div style="position:absolute;left:997px;top:511px;width:80px;height:19px;background:#f3f3f3;border:1px solid #e4e4e4;"></div>
<div style="position:absolute;left:997px;top:529px;width:80px;height:19px;background:#fff;border:1px solid #e4e4e4;"></div>
<div style="position:absolute;left:997px;top:547px;width:80px;height:18px;background:#f8f8f8;border:1px solid #e4e4e4;"></div>
<div style="position:absolute;left:1003px;top:516px;font-size:11px;line-height:11px;color:#111;font-weight:bold;white-space:nowrap;">販管費</div>
<div style="position:absolute;left:1076px;top:511px;width:80px;height:19px;background:#f3f3f3;border:1px solid #e4e4e4;"></div>
<div style="position:absolute;left:1076px;top:529px;width:80px;height:19px;background:#fff;border:1px solid #e4e4e4;"></div>
<div style="position:absolute;left:1076px;top:547px;width:80px;height:18px;background:#f8f8f8;border:1px solid #e4e4e4;"></div>
<div style="position:absolute;left:1082px;top:516px;font-size:11px;line-height:11px;color:#111;font-weight:bold;white-space:nowrap;">純利益</div>
<div style="position:absolute;left:1155px;top:511px;width:51px;height:19px;background:#f3f3f3;border:1px solid #e4e4e4;"></div>
<div style="position:absolute;left:1155px;top:529px;width:51px;height:19px;background:#fff;border:1px solid #e4e4e4;"></div>
<div style="position:absolute;left:1155px;top:547px;width:51px;height:18px;background:#f8f8f8;border:1px solid #e4e4e4;"></div>
<div style="position:absolute;left:1161px;top:516px;font-size:11px;line-height:11px;color:#111;font-weight:bold;white-space:nowrap;">%</div>
<div style="position:absolute;left:397px;top:533px;width:58px;text-align:center;font-size:11px;line-height:11px;color:#111;font-weight:bold;white-space:nowrap;">計画</div>
<div style="position:absolute;left:397px;top:551px;width:58px;text-align:center;font-size:11px;line-height:11px;color:#111;font-weight:bold;white-space:nowrap;">実績</div>
<div style="position:absolute;right:676px;top:533px;font-size:11px;line-height:11px;color:#111;font-weight:normal;white-space:nowrap;">0</div>
<div style="position:absolute;right:676px;top:551px;font-size:11px;line-height:11px;color:#111;font-weight:normal;white-space:nowrap;">0</div>
<div style="position:absolute;right:578px;top:533px;font-size:11px;line-height:11px;color:#111;font-weight:normal;white-space:nowrap;">0</div>
<div style="position:absolute;right:578px;top:551px;font-size:11px;line-height:11px;color:#111;font-weight:normal;white-space:nowrap;">0</div>
<div style="position:absolute;right:499px;top:533px;font-size:11px;line-height:11px;color:#111;font-weight:normal;white-space:nowrap;">0</div>
<div style="position:absolute;right:499px;top:551px;font-size:11px;line-height:11px;color:#111;font-weight:normal;white-space:nowrap;">0</div>
<div style="position:absolute;right:450px;top:533px;font-size:11px;line-height:11px;color:#111;font-weight:normal;white-space:nowrap;">0.0</div>
<div style="position:absolute;right:450px;top:551px;font-size:11px;line-height:11px;color:#111;font-weight:normal;white-space:nowrap;">0.0</div>
<div style="position:absolute;right:331px;top:533px;font-size:11px;line-height:11px;color:#111;font-weight:normal;white-space:nowrap;">0</div>
<div style="position:absolute;right:331px;top:551px;font-size:11px;line-height:11px;color:#111;font-weight:normal;white-space:nowrap;">0</div>
<div style="position:absolute;right:233px;top:533px;font-size:11px;line-height:11px;color:#111;font-weight:normal;white-space:nowrap;">0</div>
<div style="position:absolute;right:233px;top:551px;font-size:11px;line-height:11px;color:#111;font-weight:normal;white-space:nowrap;">0</div>
<div style="position:absolute;right:154px;top:533px;font-size:11px;line-height:11px;color:#111;font-weight:normal;white-space:nowrap;">0</div>
<div style="position:absolute;right:154px;top:551px;font-size:11px;line-height:11px;color:#111;font-weight:normal;white-space:nowrap;">0</div>
<div style="position:absolute;right:75px;top:533px;font-size:11px;line-height:11px;color:#111;font-weight:normal;white-space:nowrap;">0</div>
<div style="position:absolute;right:75px;top:551px;font-size:11px;line-height:11px;color:#111;font-weight:normal;white-space:nowrap;">0</div>
<div style="position:absolute;right:25px;top:533px;font-size:11px;line-height:11px;color:#111;font-weight:normal;white-space:nowrap;">0.0</div>
<div style="position:absolute;right:25px;top:551px;font-size:11px;line-height:11px;color:#111;font-weight:normal;white-space:nowrap;">0.0</div>
<div style="position:absolute;left:397px;top:580px;width:808px;height:19px;background:#f3a647;border-top:1px solid #f29b36;border-bottom:1px solid #f29b36;"></div>
<div style="position:absolute;left:407px;top:584px;font-size:11px;line-height:11px;color:#111;font-weight:bold;white-space:nowrap;">案件承認一覧</div>
<div style="position:absolute;left:397px;top:599px;width:136px;height:22px;background:#f3f3f3;border:1px solid #e4e4e4;"></div>
<div style="position:absolute;left:532px;top:599px;width:135px;height:22px;background:#f3f3f3;border:1px solid #e4e4e4;"></div>
<div style="position:absolute;left:666px;top:599px;width:135px;height:22px;background:#f3f3f3;border:1px solid #e4e4e4;"></div>
<div style="position:absolute;left:800px;top:599px;width:136px;height:22px;background:#f3f3f3;border:1px solid #e4e4e4;"></div>
<div style="position:absolute;left:935px;top:599px;width:136px;height:22px;background:#f3f3f3;border:1px solid #e4e4e4;"></div>
<div style="position:absolute;left:1070px;top:599px;width:136px;height:22px;background:#f3f3f3;border:1px solid #e4e4e4;"></div>
<div style="position:absolute;left:538px;top:603px;font-size:11px;line-height:11px;color:#111;font-weight:bold;white-space:nowrap;">見積</div>
<div style="position:absolute;left:672px;top:603px;font-size:11px;line-height:11px;color:#111;font-weight:bold;white-space:nowrap;">受注</div>
<div style="position:absolute;left:806px;top:603px;font-size:11px;line-height:11px;color:#111;font-weight:bold;white-space:nowrap;">発注</div>
<div style="position:absolute;left:941px;top:603px;font-size:11px;line-height:11px;color:#111;font-weight:bold;white-space:nowrap;">売上</div>
<div style="position:absolute;left:1076px;top:603px;font-size:11px;line-height:11px;color:#111;font-weight:bold;white-space:nowrap;">仕入</div>
<div style="position:absolute;left:412px;top:4px;width:403px;height:117px;background:#fff;border:1px solid #b8b8b8;border-radius:2px;box-shadow:0 2px 4px rgba(0,0,0,0.25);"></div>
<div style="position:absolute;left:573px;top:20px;font-size:13px;line-height:13px;color:#333;font-weight:normal;white-space:nowrap;">.co.jp の内容</div>
<div style="position:absolute;left:427px;top:40px;font-size:12px;line-height:12px;color:#555;font-weight:normal;white-space:nowrap;letter-spacing:-1.72px;">表示データの案件登録後、この案件の進捗状況を失注に更新します。よろしいで</div>
<div style="position:absolute;left:427px;top:53px;font-size:12px;line-height:12px;color:#555;font-weight:normal;white-space:nowrap;letter-spacing:-2px;">すか？</div>
<div style="position:absolute;left:445px;top:32px;width:4px;height:1px;background:#bbb;"></div>
<div style="position:absolute;left:477px;top:32px;width:2px;height:1px;background:#ccc;"></div>
<div style="position:absolute;left:495px;top:32px;width:4px;height:1px;background:#bbb;"></div>
<div style="position:absolute;left:647px;top:79px;width:77px;height:30px;border:3px solid #f00;border-radius:3px;background:#4285f4;box-shadow:inset 0 0 0 1px #fff0;"></div>
<div style="position:absolute;left:679px;top:88px;font-size:11px;line-height:11px;color:#fff;font-weight:normal;white-space:nowrap;">OK</div>
<div style="position:absolute;left:729px;top:80px;width:70px;height:25px;border:1.5px solid #d2d2d2;border-radius:3px;background:#fff;color:#666;font-size:11px;line-height:23px;text-align:center;letter-spacing:-2.3px;">キャンセル</div>
<div style="position:absolute;left:0px;top:608px;width:1225px;height:3px;background:#d8dbe0;"></div>
<div style="position:absolute;left:111px;top:608px;width:1110px;height:6px;background:#f0f3f8;border:1px solid #707a85;border-radius:3px;"></div>
</body></html>
